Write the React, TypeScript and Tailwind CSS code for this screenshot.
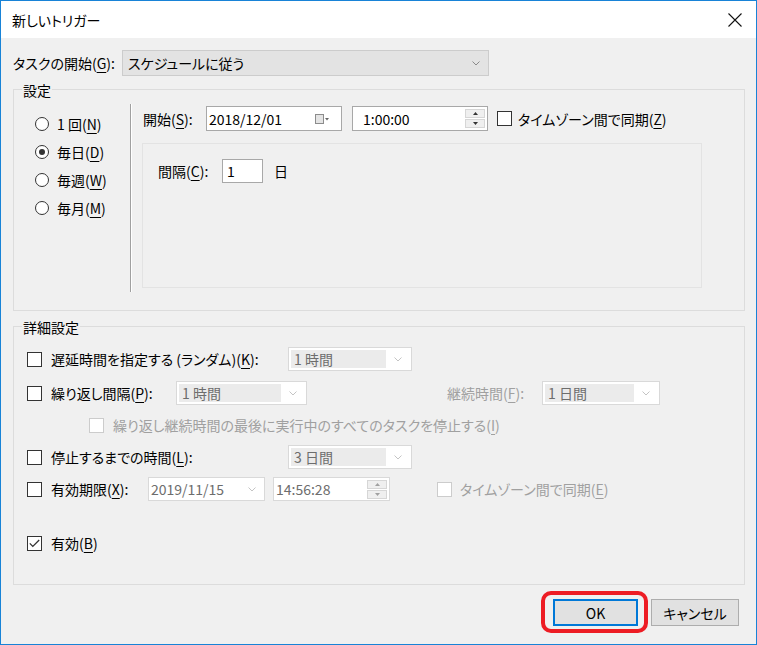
import React from "react";

const U = ({ c }: { c: string }) => <span className="underline underline-offset-[3px] decoration-1">{c}</span>;

function Chevron({ c = "#a8a8a8" }: { c?: string }) {
  return (
    <svg width="8" height="5" viewBox="0 0 8 5">
      <path d="M0.5 0.5 L4 4 L7.5 0.5" stroke={c} fill="none" strokeWidth="1" />
    </svg>
  );
}

function Check({ checked = false, disabled = false }: { checked?: boolean; disabled?: boolean }) {
  return (
    <div
      className={
        disabled
          ? "w-[15px] h-[15px] shrink-0 border border-[#cccccc] bg-white"
          : "w-[15px] h-[15px] shrink-0 border border-[#333333] bg-white flex items-center justify-center"
      }
    >
      {checked && (
        <svg width="11" height="9" viewBox="0 0 11 9">
          <path d="M0.8 4.4 L3.8 7.4 L10.2 1" stroke="#333" strokeWidth="1.3" fill="none" />
        </svg>
      )}
    </div>
  );
}

function Radio({ checked = false }: { checked?: boolean }) {
  return (
    <div className="w-[14px] h-[14px] shrink-0 rounded-full border border-[#333333] bg-white flex items-center justify-center">
      {checked && <div className="w-[6px] h-[6px] rounded-full bg-[#333333]" />}
    </div>
  );
}

function Spinner({ disabled = false }: { disabled?: boolean }) {
  const c = disabled ? "#a0a0a0" : "#333";
  return (
    <div className="w-[20px] h-[19px] flex flex-col gap-[1px]">
      <div className="flex-1 border border-[#d6d6d6] bg-[#efefef] flex items-center justify-center">
        <svg width="5" height="3" viewBox="0 0 5 3"><path d="M0 3 L2.5 0 L5 3 Z" fill={c} /></svg>
      </div>
      <div className="flex-1 border border-[#d6d6d6] bg-[#efefef] flex items-center justify-center">
        <svg width="5" height="3" viewBox="0 0 5 3"><path d="M0 0 L2.5 3 L5 0 Z" fill={c} /></svg>
      </div>
    </div>
  );
}

function DCombo({ w, text }: { w: string; text: string }) {
  return (
    <div className={`${w} h-[24px] shrink-0 bg-white border border-[#d9d9d9] flex p-[2px]`}>
      <div className="flex-1 bg-[#ebebeb] text-[#6d6d6d] pl-[3px] flex items-center">{text}</div>
      <div className="w-[23px] flex items-center justify-center">
        <Chevron c="#c4c4c4" />
      </div>
    </div>
  );
}

export default function App() {
  return (
    <div className="w-[757px] h-[645px] border border-[#1883d7] flex flex-col bg-[#f0f0f0] text-[14px] leading-[20px] text-black font-['Noto_Sans_CJK_JP',sans-serif] [font-feature-settings:'palt']">
      {/* title bar */}
      <div className="h-[37px] shrink-0 bg-white flex items-center justify-between pl-[11px] pr-[14px]">
        <span>新しいトリガー</span>
        <svg width="14" height="14" viewBox="0 0 14 14">
          <path d="M0.5 0.5 L13.5 13.5 M13.5 0.5 L0.5 13.5" stroke="#111" strokeWidth="1.1" />
        </svg>
      </div>

      {/* body */}
      <div className="flex-1 flex flex-col pl-[12px]">
        {/* start row */}
        <div className="mt-[12px] h-[26px] flex items-center">
          <div className="w-[109px] shrink-0">
            タスクの開始(<U c="G" />):
          </div>
          <div className="w-[367px] h-[26px] bg-[#e3e3e3] border border-[#cccccc] flex items-center justify-between pl-[5px] pr-[8px]">
            <span>スケジュールに従う</span>
            <Chevron c="#8a8a8a" />
          </div>
        </div>

        {/* 設定 group */}
        <div className="relative mt-[13px] w-[732px] h-[222px] border border-[#dcdcdc] flex items-start">
          <span className="absolute left-[8px] top-[-10px] px-[1px] bg-[#f0f0f0]">設定</span>

          <div className="w-[116px] shrink-0 pt-[20px] pl-[21px] flex flex-col">
            <div className="h-[28px] flex items-center gap-[8px]">
              <Radio />
              <span>1 回(<U c="N" />)</span>
            </div>
            <div className="h-[28px] flex items-center gap-[8px]">
              <Radio checked />
              <span>毎日(<U c="D" />)</span>
            </div>
            <div className="h-[28px] flex items-center gap-[8px]">
              <Radio />
              <span>毎週(<U c="W" />)</span>
            </div>
            <div className="h-[28px] flex items-center gap-[8px]">
              <Radio />
              <span>毎月(<U c="M" />)</span>
            </div>
          </div>

          <div className="mt-[14px] h-[188px] w-[2px] border-l border-l-[#a0a0a0] border-r border-r-white shrink-0" />

          <div className="pl-[10px] pt-[16px] flex flex-col">
            <div className="pl-[1px] h-[25px] flex items-center">
              <div className="w-[63px] shrink-0">
                開始(<U c="S" />):
              </div>
              <div className="w-[136px] h-[25px] bg-white border border-[#a8a8a8] flex items-center justify-between pl-[2px] pr-[11px]">
                <span>2018/12/01</span>
                <svg width="15" height="10" viewBox="0 0 15 10">
                  <rect x="0.5" y="0.5" width="8" height="9" fill="#e4e4e4" stroke="#8c8c8c" />
                  <path d="M10 4 L14 4 L12 6.5 Z" fill="#666" />
                </svg>
              </div>
              <div className="ml-[10px] w-[136px] h-[25px] bg-white border border-[#a8a8a8] flex items-center justify-between pl-[10px] pr-[2px]">
                <span>1:00:00</span>
                <Spinner />
              </div>
              <div className="ml-[9px]">
                <Check />
              </div>
              <span className="ml-[6px]">
                タイムゾーン間で同期(<U c="Z" />)
              </span>
            </div>

            <div className="mt-[12px] w-[560px] h-[145px] border border-[#e3e3e3] pt-[15px] pl-[15px]">
              <div className="h-[24px] flex items-center">
                <div className="w-[64px] shrink-0">
                  間隔(<U c="C" />):
                </div>
                <div className="w-[41px] h-[24px] bg-white border border-[#a8a8a8] pl-[4px] flex items-center">1</div>
                <span className="ml-[11px]">日</span>
              </div>
            </div>
          </div>
        </div>

        {/* 詳細設定 group */}
        <div className="relative mt-[15px] w-[732px] h-[259px] border border-[#dcdcdc] pt-[19px] pl-[13px] flex flex-col">
          <span className="absolute left-[8px] top-[-10px] px-[1px] bg-[#f0f0f0]">詳細設定</span>

          <div className="h-[26px] flex items-center">
            <Check />
            <div className="ml-[9px] w-[237px] shrink-0">
              遅延時間を指定する (ランダム)(<U c="K" />):
            </div>
            <DCombo w="w-[124px]" text="1 時間" />
          </div>

          <div className="mt-[8px] h-[26px] flex items-center">
            <Check />
            <div className="ml-[9px] w-[125px] shrink-0">
              繰り返し間隔(<U c="P" />):
            </div>
            <DCombo w="w-[131px]" text="1 時間" />
            <div className="ml-[140px] w-[95px] shrink-0 text-[#a0a0a0]">
              継続時間(<U c="F" />):
            </div>
            <DCombo w="w-[118px]" text="1 日間" />
          </div>

          <div className="mt-[8px] h-[22px] flex items-center pl-[62px]">
            <Check disabled />
            <span className="ml-[9px] text-[#a0a0a0]">
              繰り返し継続時間の最後に実行中のすべてのタスクを停止する(<U c="I" />)
            </span>
          </div>

          <div className="mt-[8px] h-[26px] flex items-center">
            <Check />
            <div className="ml-[9px] w-[237px] shrink-0">
              停止するまでの時間(<U c="L" />):
            </div>
            <DCombo w="w-[124px]" text="3 日間" />
          </div>

          <div className="mt-[6px] h-[26px] flex items-center">
            <Check />
            <div className="ml-[9px] w-[97px] shrink-0">
              有効期限(<U c="X" />):
            </div>
            <div className="w-[117px] h-[24px] bg-white border border-[#d9d9d9] flex items-center justify-between pl-[2px] pr-[8px] text-[#6d6d6d]">
              <span>2019/11/15</span>
              <Chevron c="#c4c4c4" />
            </div>
            <div className="ml-[8px] w-[117px] h-[24px] bg-white border border-[#d9d9d9] flex items-center justify-between pl-[2px] pr-[2px] text-[#6d6d6d]">
              <span>14:56:28</span>
              <Spinner disabled />
            </div>
            <div className="ml-[47px]">
              <Check disabled />
            </div>
            <span className="ml-[8px] text-[#a0a0a0]">
              タイムゾーン間で同期(<U c="E" />)
            </span>
          </div>

          <div className="mt-[30px] h-[22px] flex items-center">
            <Check checked />
            <span className="ml-[9px]">
              有効(<U c="B" />)
            </span>
          </div>
        </div>

        {/* buttons */}
        <div className="mt-[14px] flex justify-end pr-[17px] gap-[13px]">
          <div className="relative">
            <div className="w-[85px] h-[27px] bg-[#e1e1e1] border-2 border-[#0078d7] flex items-center justify-center">OK</div>
            <div className="absolute -left-[12px] -right-[10px] -top-[8px] -bottom-[7px] border-[4px] border-[#ed1c24] rounded-[10px]" />
          </div>
          <div className="w-[88px] h-[27px] bg-[#e1e1e1] border border-[#adadad] flex items-center justify-center">キャンセル</div>
        </div>
      </div>
    </div>
  );
}
